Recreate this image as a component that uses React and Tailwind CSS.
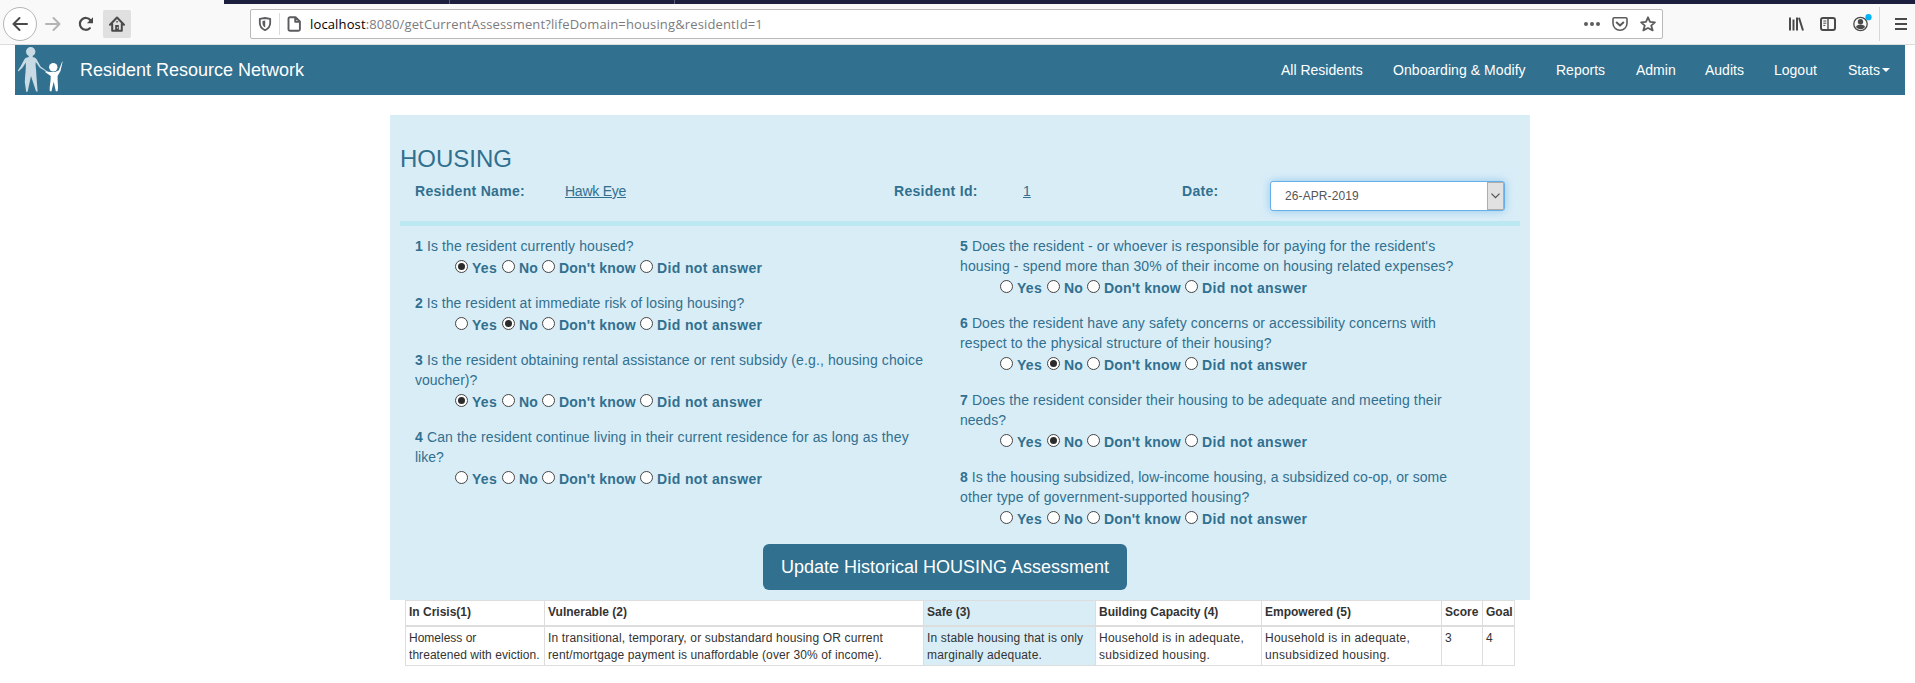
import React from "react";

const NAV = [
  ["All Residents", "w-[112px]"],
  ["Onboarding & Modify", "w-[163px] tracking-[0.06px]"],
  ["Reports", "w-[80px]"],
  ["Admin", "w-[69px]"],
  ["Audits", "w-[69px]"],
  ["Logout", "w-[74px]"],
];

const OPTIONS = [
  ["Yes", "w-[47px]", "tracking-[0.3px]"],
  ["No", "w-[40px]", "tracking-[0.1px]"],
  ["Don't know", "w-[98px]", "tracking-[0.2px]"],
  ["Did not answer", "w-[130px]", "tracking-[0.36px]"],
];

const LEFT = [
  { n: 1, picked: 0, lines: [["Is the resident currently housed?", "tracking-[0.11px]"]] },
  { n: 2, picked: 1, lines: [["Is the resident at immediate risk of losing housing?", "tracking-[0.06px]"]] },
  {
    n: 3,
    picked: 0,
    lines: [
      ["Is the resident obtaining rental assistance or rent subsidy (e.g., housing choice", "tracking-[0.12px]"],
      ["voucher)?", "tracking-normal"],
    ],
  },
  {
    n: 4,
    picked: -1,
    lines: [
      ["Can the resident continue living in their current residence for as long as they", "tracking-[0.13px]"],
      ["like?", "tracking-normal"],
    ],
  },
];

const RIGHT = [
  {
    n: 5,
    picked: -1,
    lines: [
      ["Does the resident - or whoever is responsible for paying for the resident's", "tracking-[0.135px]"],
      ["housing - spend more than 30% of their income on housing related expenses?", "tracking-[0.115px]"],
    ],
  },
  {
    n: 6,
    picked: 1,
    lines: [
      ["Does the resident have any safety concerns or accessibility concerns with", "tracking-[0.1px]"],
      ["respect to the physical structure of their housing?", "tracking-[0.13px]"],
    ],
  },
  {
    n: 7,
    picked: 1,
    lines: [
      ["Does the resident consider their housing to be adequate and meeting their", "tracking-[0.135px]"],
      ["needs?", "tracking-normal"],
    ],
  },
  {
    n: 8,
    picked: -1,
    lines: [
      ["Is the housing subsidized, low-income housing, a subsidized co-op, or some", "tracking-[0.05px]"],
      ["other type of government-supported housing?", "tracking-[0.14px]"],
    ],
  },
];

const COLUMNS = [
  { head: "In Crisis(1)", width: "w-[139px]", lines: [["Homeless or", ""], ["threatened with eviction.", "tracking-[0.05px]"]] },
  {
    head: "Vulnerable (2)",
    width: "w-[379px]",
    lines: [
      ["In transitional, temporary, or substandard housing OR current", "tracking-[0.16px]"],
      ["rent/mortgage payment is unaffordable (over 30% of income).", "tracking-[0.125px]"],
    ],
  },
  {
    head: "Safe (3)",
    width: "w-[172px]",
    active: true,
    lines: [["In stable housing that is only", "tracking-[0.16px]"], ["marginally adequate.", "tracking-[0.18px]"]],
  },
  {
    head: "Building Capacity (4)",
    width: "w-[166px]",
    lines: [["Household is in adequate,", "tracking-[0.25px]"], ["subsidized housing.", "tracking-[0.3px]"]],
  },
  {
    head: "Empowered (5)",
    width: "w-[180px]",
    lines: [["Household is in adequate,", "tracking-[0.25px]"], ["unsubsidized housing.", "tracking-[0.3px]"]],
  },
  { head: "Score", width: "w-[41px]", lines: [["3", ""]] },
  { head: "Goal", width: "w-[32px]", lines: [["4", ""]] },
];

function Radio({ on }) {
  return (
    <span className="mt-[2px] flex size-[13px] shrink-0 items-center justify-center rounded-full border border-[#444] bg-white">
      {on && <span className="size-[7px] rounded-full bg-[#2b2b2b]" />}
    </span>
  );
}

function Question({ n, lines, picked }) {
  return (
    <div className="pb-[15px]">
      {lines.map(([line, tracking], i) => (
        <p key={line} className={`h-5 whitespace-nowrap ${tracking}`}>
          {i === 0 && <b>{n} </b>}
          {line}
        </p>
      ))}
      <div className="mt-[2px] flex h-5 pl-10">
        {OPTIONS.map(([label, width, tracking], i) => (
          <label key={label} className={`flex gap-1 ${width}`}>
            <Radio on={picked === i} />
            <span className={`font-bold whitespace-nowrap ${tracking}`}>{label}</span>
          </label>
        ))}
      </div>
    </div>
  );
}

function BrowserBar() {
  return (
    <div className="h-[45px] border-b border-[#dcdcdc] bg-[#f9f9fa]">
      <div className="ml-[224px] flex h-1 bg-[#1d1f3e]">
        <span className="ml-[225px] w-px bg-[#5a5b78]" />
        <span className="ml-[224px] w-px bg-[#5a5b78]" />
      </div>
      <div className="flex h-10">
        <div className="flex w-[250px] pl-[3px]">
          <div className="mt-[3px] flex size-[34px] items-center justify-center rounded-full border border-[#b5b5b5] bg-white">
            <svg width="16" height="16" viewBox="0 0 16 16" fill="none" stroke="#4a4a4a" strokeWidth="2" strokeLinecap="round" strokeLinejoin="round">
              <path d="M15 8H1.500M7.500 2L1.500 8l6 6" />
            </svg>
          </div>
          <svg className="mt-3 ml-2" width="16" height="16" viewBox="0 0 16 16" fill="none" stroke="#b4b4b4" strokeWidth="2" strokeLinecap="round" strokeLinejoin="round">
            <path d="M1 8h13.500M8.500 2l6 6-6 6" />
          </svg>
          <svg className="mt-3 ml-[17px]" width="16" height="16" viewBox="0 0 16 16">
            <path d="M11.800 12.200A5.900 5.900 0 1 1 12.400 4.200" fill="none" stroke="#4a4a4a" strokeWidth="2.200" strokeLinecap="round" />
            <path d="M15 1.200v6.100H8.900z" fill="#4a4a4a" />
          </svg>
          <div className="mt-[6px] ml-[9px] flex size-7 items-center justify-center rounded-[2px] bg-[#e0e0e1]">
            <svg width="16" height="16" viewBox="0 0 16 16">
              <path d="M1 8.700L8 1.500l7 7.200M3.200 8v6.700h9.600V8" fill="none" stroke="#4a4a4a" strokeWidth="2" strokeLinecap="round" strokeLinejoin="round" />
              <path d="M6.200 9h3.600v5.500H6.200zM7.300 5h1.500v1.500H7.300z" fill="#4a4a4a" />
              <path d="M7.900 11.300h.9v1.200h-.9z" fill="#fff" />
            </svg>
          </div>
        </div>
        <div className="mt-[5px] flex h-[30px] w-[1413px] items-center rounded-[2px] border border-[#b9b9ba] bg-white">
          <svg className="ml-[7px]" width="14" height="16" viewBox="0 0 14 16">
            <path d="M7 2l5.200.8v4c0 3.400-1.800 5.900-5.200 7.400-3.400-1.500-5.200-4-5.200-7.400v-4z" fill="none" stroke="#5c5c5e" strokeWidth="1.800" strokeLinejoin="round" />
            <path d="M7.200 4.500l-2.700.4v2.300c0 1.800.9 3.300 2.700 4.400z" fill="#5c5c5e" />
          </svg>
          <span className="ml-[7px] h-[22px] w-px bg-[#dcdcdc]" />
          <svg className="ml-[7px]" width="14" height="16" viewBox="0 0 14 16" fill="none" stroke="#5c5c5e" strokeWidth="1.900" strokeLinejoin="round">
            <path d="M3 1.200h5.500L12.900 5.400v7.900c0 .9-.6 1.500-1.500 1.500H3c-.9 0-1.500-.6-1.500-1.500V2.700c0-.9.6-1.500 1.500-1.500zM8.200 1.500v4.200h4.500" />
          </svg>
          <span className="ml-[9px] font-['Open_Sans','Noto_Sans',sans-serif] text-[13px] tracking-[0.14px] whitespace-nowrap text-[#7c7c7e]">
            <span className="text-black">localhost</span>:8080/getCurrentAssessment?lifeDomain=housing&amp;residentId=1
          </span>
          <svg className="ml-auto" width="16" height="16" viewBox="0 0 16 16" fill="#5c5c5e">
            <circle cx="2" cy="8" r="2" />
            <circle cx="8" cy="8" r="2" />
            <circle cx="14" cy="8" r="2" />
          </svg>
          <svg className="ml-3" width="16" height="16" viewBox="0 0 16 16" fill="none" stroke="#5c5c5e" strokeLinecap="round" strokeLinejoin="round">
            <path d="M2.200 1.800h11.600c.7 0 1.200.5 1.200 1.200v4.300a7 7 0 0 1-14 0V3c0-.7.5-1.200 1.200-1.200z" strokeWidth="1.600" />
            <path d="M4.700 6.500L8 9.600l3.300-3.100" strokeWidth="2" />
          </svg>
          <svg className="mr-[6px] ml-3" width="16" height="16" viewBox="0 0 16 16" fill="none" stroke="#5c5c5e" strokeWidth="1.800" strokeLinejoin="round">
            <path d="M8 1.300l2 4.500 4.900.5-3.700 3.300 1.500 4.800L8 12l-4.700 2.400 1.500-4.800L1.100 6.300 6 5.800z" />
          </svg>
        </div>
        <div className="flex pt-3 pl-[125px]">
          <svg width="16" height="16" viewBox="0 0 16 16" stroke="#4a4a4a" strokeWidth="2">
            <path d="M2 1.500v13M5.500 3.500v11M9 1.500v13M11 1.800l4 12.700" />
          </svg>
          <svg className="ml-4" width="16" height="16" viewBox="0 0 16 16" fill="none" stroke="#4a4a4a">
            <rect x="1" y="2" width="14" height="12" rx="2" strokeWidth="2" />
            <path d="M8 2v12" strokeWidth="1.400" />
            <path d="M3.300 5h3M3.300 7.200h3M3.300 9.400h2" />
          </svg>
          <svg className="-mt-[2px] ml-[17px]" width="19" height="19" viewBox="0 0 19 19">
            <circle cx="7.500" cy="10" r="6.700" fill="none" stroke="#4a4a4a" strokeWidth="1.300" />
            <circle cx="7.500" cy="7.800" r="2.700" fill="#4a4a4a" />
            <path d="M3 13c.5-2 2.300-2.300 4.500-2.300S11.500 11 12 13c-1.200 1.500-2.700 2.200-4.500 2.200S4.200 14.500 3 13z" fill="#4a4a4a" />
            <circle cx="15.500" cy="3.200" r="3.100" fill="#00b3f4" />
          </svg>
          <span className="-mt-[9px] ml-[7px] h-[34px] w-px bg-[#d7d7d8]" />
          <svg className="ml-[14px]" width="14" height="16" viewBox="0 0 14 16" stroke="#4a4a4a" strokeWidth="2">
            <path d="M1 3h12M1 8h12M1 13h12" />
          </svg>
        </div>
      </div>
    </div>
  );
}

function Logo() {
  return (
    <svg className="ml-[2px] shrink-0" width="48" height="50" viewBox="0 0 48 50">
      <g fill="#c8dbe5">
        <circle cx="13.700" cy="6.700" r="4.700" />
        <path d="M12 11h3.500l.5 1.300c2.300.3 3.600 1.200 4.300 3.200l3.300 6 7.200 5.200-.4.600-7.600-4.600-4.100-5.700c-.6 4 .8 8 .6 12L20.600 46.800l-1.600-.6-5-15.200-3.300 15.500-1.500.6L7.800 37c.2-7 1.400-12.500 1-19.500L5.600 22.600 1.400 26.400l-.5-.8 2.800-4.400 3.200-6c.8-1.900 2.200-2.700 4.500-2.900z" />
      </g>
      <g fill="#fff">
        <circle cx="36.300" cy="22.200" r="4.200" />
        <path d="M28.500 26.300l4.600.6 5 .1 3.700-1.800 3.400-8.600.4.200-2.100 9.100-2.900 5c-.3 5 .9 10.200.1 15.200l-1.800.4-2.200-9.700-2.300 9.600-1.700-.3c-.4-5.200 1.300-10 1-15.200l-5.300-3.600z" />
      </g>
    </svg>
  );
}

export default function App() {
  return (
    <div className="h-[683px] w-[1915px] overflow-hidden bg-white font-['Liberation_Sans',Arial,sans-serif] text-sm leading-5">
      <BrowserBar />
      <nav className="mr-[10px] ml-[15px] flex h-[50px] items-center bg-[#31708f] text-white">
        <Logo />
        <span className="ml-[15px] text-lg whitespace-nowrap">Resident Resource Network</span>
        <div className="ml-auto flex">
          {NAV.map(([label, width]) => (
            <a key={label} className={`whitespace-nowrap ${width}`}>{label}</a>
          ))}
          <a className="flex w-[57px] items-center gap-[2px]">
            Stats
            <svg width="8" height="4" viewBox="0 0 8 4" fill="#fff"><path d="M0 0h8L4 4z" /></svg>
          </a>
        </div>
      </nav>

      <main className="mt-5 ml-[390px] w-[1140px]">
        <section className="h-[485px] bg-[#d9edf7] px-[10px] pt-[31px] text-[#31708f]">
          <h1 className="h-[35px] text-2xl leading-[26px]">HOUSING</h1>
          <div className="flex h-10 pl-[15px]">
            <b className="w-[150px] tracking-[0.3px]">Resident Name:</b>
            <div className="w-[329px]"><u className="tracking-[-0.25px]">Hawk Eye</u></div>
            <b className="w-[129px] tracking-[0.3px]">Resident Id:</b>
            <div className="w-[159px]"><u>1</u></div>
            <b className="w-[88px] tracking-[0.3px]">Date:</b>
            <div className="flex h-[30px] w-[235px] items-center justify-between rounded-[3px] border border-[#66afe9] bg-white pl-[14px] text-xs tracking-[0.1px] text-[#555] shadow-[0_0_8px_rgba(102,175,233,0.6)]">
              26-APR-2019
              <span className="flex h-7 w-[17px] items-center justify-center border border-[#adadad] bg-[#e1e1e1]">
                <svg width="9" height="6" viewBox="0 0 9 6" fill="none" stroke="#505050" strokeWidth="1.200"><path d="M.5.7l4 4 4-4" /></svg>
              </span>
            </div>
          </div>
          <div className="h-[5px] bg-[#bce8f1]" />
          <div className="flex h-[318px] pt-[10px] pl-[15px]">
            <div className="w-[545px]">
              {LEFT.map((q) => <Question key={q.n} {...q} />)}
            </div>
            <div>
              {RIGHT.map((q) => <Question key={q.n} {...q} />)}
            </div>
          </div>
          <button className="ml-[363px] h-[46px] w-[364px] rounded-md bg-[#31708f] text-lg whitespace-nowrap text-white">
            Update Historical HOUSING Assessment
          </button>
        </section>

        <table className="ml-[15px] w-[1110px] table-fixed border-collapse text-left text-xs leading-[17px] text-[#333]">
          <thead>
            <tr className="h-[25px]">
              {COLUMNS.map((c) => (
                <th key={c.head} className={`border border-b-2 border-[#ddd] px-[3px] py-0 whitespace-nowrap ${c.width} ${c.active ? "bg-[#d9edf7]" : ""}`}>{c.head}</th>
              ))}
            </tr>
          </thead>
          <tbody>
            <tr className="h-10 align-top">
              {COLUMNS.map((c) => (
                <td key={c.head} className={`border border-[#ddd] px-[3px] pt-[3px] pb-0 whitespace-nowrap ${c.active ? "bg-[#d9edf7]" : ""}`}>
                  {c.lines.map(([line, tracking]) => <p key={line} className={tracking}>{line}</p>)}
                </td>
              ))}
            </tr>
          </tbody>
        </table>
      </main>
    </div>
  );
}
